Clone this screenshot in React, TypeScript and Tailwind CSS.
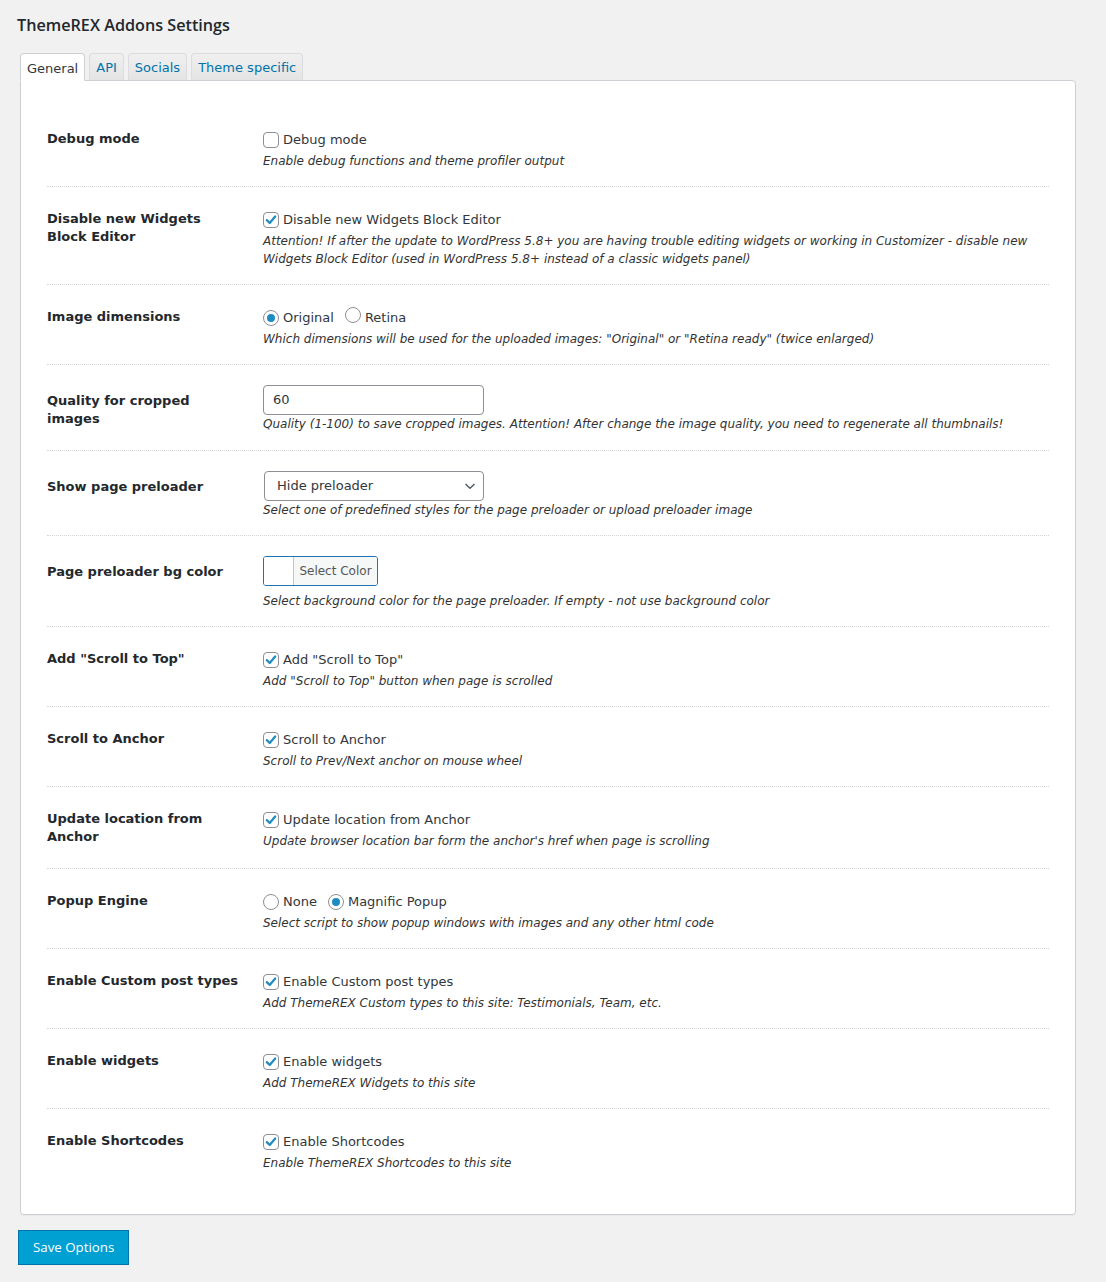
import React from "react";

const F = { fontFamily: '"DejaVu Sans", Verdana, sans-serif' };

function Check({ checked }: { checked?: boolean }) {
  return (
    <span className="inline-flex w-[16px] h-[16px] rounded-[4px] border border-[#8c8f94] bg-white items-center justify-center shrink-0">
      {checked && (
        <svg width="14" height="14" viewBox="0 0 20 20">
          <path d="M4 10.2 L8.2 14.4 L16 5" fill="none" stroke="#1e8cbe" strokeWidth="3.2" strokeLinecap="round" strokeLinejoin="round" />
        </svg>
      )}
    </span>
  );
}

function Radio({ checked }: { checked?: boolean }) {
  return (
    <span className="inline-flex w-[16px] h-[16px] rounded-full border border-[#8c8f94] bg-white items-center justify-center shrink-0">
      {checked && <span className="w-[8px] h-[8px] rounded-full bg-[#1e8cbe]" />}
    </span>
  );
}

function Desc({ children }: { children: React.ReactNode }) {
  return <div className="text-[12px] leading-[18px] italic text-[#333]">{children}</div>;
}

function Row({
  label,
  labelPt = 23,
  children,
  last,
}: {
  label: React.ReactNode;
  labelPt?: number;
  children: React.ReactNode;
  last?: boolean;
}) {
  return (
    <div className={`flex ${last ? "" : "border-b border-dotted border-[#d4d4d4]"}`}>
      <div
        className={`w-[216px] shrink-0 pr-4 text-[13px] leading-[18px] font-bold text-[#23282d] ${
          labelPt === 27 ? "pt-[27px]" : "pt-[23px]"
        }`}
      >
        {label}
      </div>
      <div className="flex-1 min-w-0">{children}</div>
    </div>
  );
}

function CheckRow({
  label,
  text,
  desc,
  checked = true,
  last,
  extra,
}: {
  label: React.ReactNode;
  text: string;
  desc: React.ReactNode;
  checked?: boolean;
  last?: boolean;
  extra?: boolean;
}) {
  return (
    <Row label={label} last={last}>
      <div className={`pt-[23px] ${extra ? "pb-[18px]" : "pb-[16px]"}`}>
        <div className="h-[20px] mb-[2px] flex items-center gap-[4px] text-[13px] text-[#32373c]">
          <Check checked={checked} />
          <span>{text}</span>
        </div>
        <Desc>{desc}</Desc>
      </div>
    </Row>
  );
}

function Tab({ children, active }: { children: React.ReactNode; active?: boolean }) {
  return active ? (
    <div className="h-[28px] px-[6px] pt-[3px] flex items-center bg-white border border-[#ccd0d4] border-b-white rounded-t-[4px] text-[#32373c] -mb-[1px]">
      {children}
    </div>
  ) : (
    <div className="h-[27px] px-[6px] pt-[2px] flex items-center bg-gradient-to-b from-[#f0f0f0] to-[#e4e4e4] border border-[#dcdcde] border-b-0 rounded-t-[4px] text-[#0073aa]">
      {children}
    </div>
  );
}

export default function App() {
  return (
    <div className="min-h-[1282px] bg-[#f1f1f1] pl-[18px] pr-[30px] pt-[12px]" style={F}>
      <h1
        className="text-[16.2px] leading-[26px] font-semibold text-[#23282d] -ml-[1px]"
        style={{ fontFamily: '"Open Sans", "Noto Sans", sans-serif' }}
      >
        ThemeREX Addons Settings
      </h1>

      <div className="ml-[2px] mt-[15px]">
        <div className="flex items-end gap-[4px] text-[13px] relative z-10">
          <Tab active>General</Tab>
          <Tab>API</Tab>
          <Tab>Socials</Tab>
          <Tab>Theme specific</Tab>
        </div>

        <div className="bg-white border border-[#ccd0d4] rounded-b-[4px] rounded-tr-[4px] shadow-[0_1px_1px_rgba(0,0,0,0.04)] px-[26px] pt-[26px] pb-[26px]">
          <CheckRow label="Debug mode" text="Debug mode" checked={false} desc="Enable debug functions and theme profiler output" />
          <CheckRow
            label={<>Disable new Widgets<br />Block Editor</>}
            text="Disable new Widgets Block Editor"
            desc="Attention! If after the update to WordPress 5.8+ you are having trouble editing widgets or working in Customizer - disable new Widgets Block Editor (used in WordPress 5.8+ instead of a classic widgets panel)"
          />

          <Row label="Image dimensions">
            <div className="pt-[23px] pb-[16px]">
              <div className="h-[20px] mb-[2px] flex items-center text-[13px] text-[#32373c]">
                <Radio checked />
                <span className="ml-[4px]">Original</span>
                <span className="ml-[11px]"><Radio /></span>
                <span className="ml-[4px]">Retina</span>
              </div>
              <Desc>Which dimensions will be used for the uploaded images: "Original" or "Retina ready" (twice enlarged)</Desc>
            </div>
          </Row>

          <Row label={<>Quality for cropped<br />images</>} labelPt={27}>
            <div className="pt-[20px] pb-[17px]">
              <div className="w-[221px] h-[30px] border border-[#8c8f94] rounded-[4px] flex items-center pl-[9px] text-[13px] text-[#32373c]">60</div>
              <Desc>Quality (1-100) to save cropped images. Attention! After change the image quality, you need to regenerate all thumbnails!</Desc>
            </div>
          </Row>

          <Row label="Show page preloader" labelPt={27}>
            <div className="pt-[20px] pb-[16px]">
              <div className="ml-[1px] w-[220px] h-[30px] border border-[#8c8f94] rounded-[4px] flex items-center justify-between pl-[12px] pr-[7px] text-[13px] text-[#32373c]">
                <span>Hide preloader</span>
                <svg width="12" height="12" viewBox="0 0 12 12">
                  <path d="M1.5 4 L6 8.2 L10.5 4" fill="none" stroke="#50575e" strokeWidth="1.4" />
                </svg>
              </div>
              <Desc>Select one of predefined styles for the page preloader or upload preloader image</Desc>
            </div>
          </Row>

          <Row label="Page preloader bg color" labelPt={27}>
            <div className="pt-[20px] pb-[16px]">
              <div className="w-[115px] h-[30px] border border-[#2271b1] rounded-[3px] flex overflow-hidden">
                <div className="w-[30px] bg-white border-r border-[#c3c4c7]" />
                <div className="flex-1 bg-[#f6f7f7] flex items-center justify-center text-[12px] text-[#555]">Select Color</div>
              </div>
              <div className="mt-[6px]">
                <Desc>Select background color for the page preloader. If empty - not use background color</Desc>
              </div>
            </div>
          </Row>

          <CheckRow label={'Add "Scroll to Top"'} text={'Add "Scroll to Top"'} desc={'Add "Scroll to Top" button when page is scrolled'} />
          <CheckRow label="Scroll to Anchor" text="Scroll to Anchor" desc="Scroll to Prev/Next anchor on mouse wheel" />
          <CheckRow
            label={<>Update location from<br />Anchor</>}
            text="Update location from Anchor"
            desc="Update browser location bar form the anchor's href when page is scrolling"
            extra
          />

          <Row label="Popup Engine">
            <div className="pt-[23px] pb-[16px]">
              <div className="h-[20px] mb-[2px] flex items-center text-[13px] text-[#32373c]">
                <Radio />
                <span className="ml-[4px]">None</span>
                <span className="ml-[11px]"><Radio checked /></span>
                <span className="ml-[4px]">Magnific Popup</span>
              </div>
              <Desc>Select script to show popup windows with images and any other html code</Desc>
            </div>
          </Row>

          <CheckRow label="Enable Custom post types" text="Enable Custom post types" desc="Add ThemeREX Custom types to this site: Testimonials, Team, etc." />
          <CheckRow label="Enable widgets" text="Enable widgets" desc="Add ThemeREX Widgets to this site" />
          <CheckRow label="Enable Shortcodes" text="Enable Shortcodes" desc="Enable ThemeREX Shortcodes to this site" last />
        </div>
      </div>

      <button
        className="mt-[15px] h-[35px] px-[14px] bg-[#00a0d2] border border-[#0073aa] text-white text-[13.3px]"
        style={{ fontFamily: '"Open Sans", "Noto Sans", sans-serif' }}
      >
        Save Options
      </button>
    </div>
  );
}
